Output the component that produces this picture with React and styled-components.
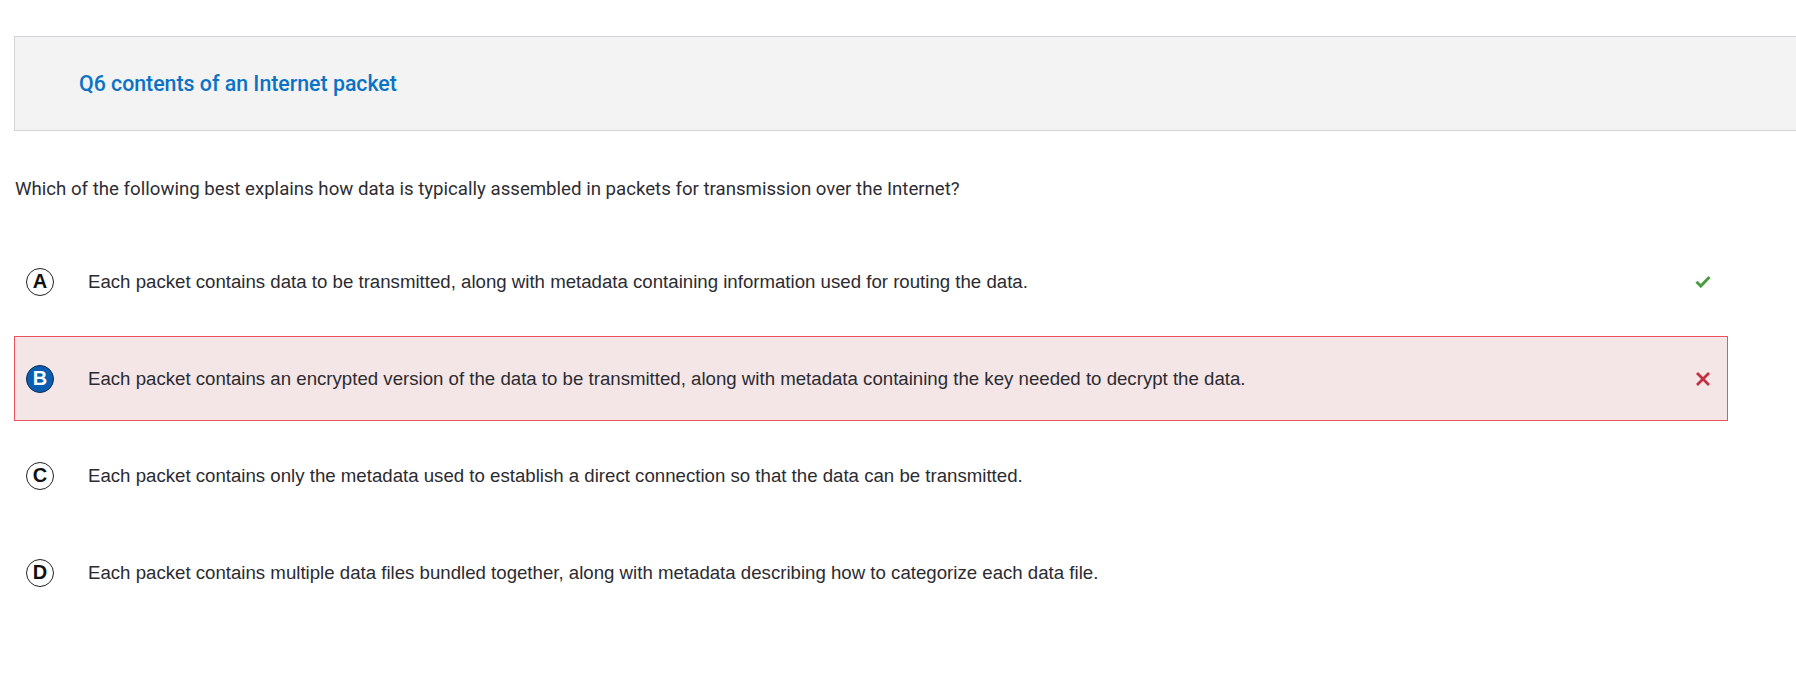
import styled, { createGlobalStyle } from "styled-components"

const GlobalStyle = createGlobalStyle`
  body {
    margin: 0;
    background: #fff;
  }
`

const Page = styled.div`
  padding: 36px 0 0 14px;
`

const Header = styled.div`
  height: 93px;
  display: flex;
  align-items: center;
  padding-left: 64px;
  background-color: #f3f3f3;
  border: 1px solid #d3d3d8;
  border-right: none;
`

const Title = styled.h2`
  margin: 0;
  color: #0b72c6;
  font-family: Roboto, "Noto Sans", sans-serif;
  font-size: 21.3px;
  font-weight: 500;
`

const Question = styled.p`
  margin: 46px 0 0 1px;
  color: #2d2d33;
  font-family: Roboto, "Liberation Sans", sans-serif;
  font-size: 18.65px;
  line-height: 24px;
`

const Options = styled.div`
  margin-top: 38px;
  width: 1714px;
  display: flex;
  flex-direction: column;
  gap: 12px;
`

const Option = styled.div`
  height: 85px;
  display: flex;
  align-items: center;
  padding: 0 11px;
  border: 1px solid ${p => (p.$wrong ? "#e9555f" : "transparent")};
  background: ${p => (p.$wrong ? "#f4e6e7" : "transparent")};
  box-sizing: border-box;
`

const Letter = styled.span`
  width: 28px;
  height: 28px;
  flex: none;
  box-sizing: border-box;
  border-radius: 50%;
  border: 1px solid ${p => (p.$picked ? "#0c2c52" : "#222")};
  background: ${p => (p.$picked ? "#0a5db1" : "#fff")};
  color: ${p => (p.$picked ? "#fff" : "#111")};
  display: flex;
  align-items: center;
  justify-content: center;
  font-family: "Liberation Sans", Arial, sans-serif;
  font-weight: 700;
  font-size: 20px;
`

const Text = styled.span`
  flex: 1;
  margin-left: 34px;
  color: #2b2b31;
  font-family: "Liberation Sans", Arial, sans-serif;
  font-size: 18.65px;
`

const Mark = styled.span`
  width: 20px;
  display: flex;
  justify-content: center;
  margin-right: 3px;
`

const Check = () => (
  <svg width="16" height="13" viewBox="0 0 16 13">
    <path d="M1.5 6.8 L5.8 11 L14.5 2" fill="none" stroke="#4a9d3e" strokeWidth="3" />
  </svg>
)

const Cross = () => (
  <svg width="16" height="16" viewBox="0 0 16 16">
    <path d="M2 2 L14 14 M14 2 L2 14" fill="none" stroke="#c52e3e" strokeWidth="2.8" />
  </svg>
)

const options = [
  { id: "A", text: "Each packet contains data to be transmitted, along with metadata containing information used for routing the data.", mark: "check" },
  { id: "B", text: "Each packet contains an encrypted version of the data to be transmitted, along with metadata containing the key needed to decrypt the data.", mark: "cross", picked: true },
  { id: "C", text: "Each packet contains only the metadata used to establish a direct connection so that the data can be transmitted." },
  { id: "D", text: "Each packet contains multiple data files bundled together, along with metadata describing how to categorize each data file." },
]

const App = () => {
  return (
    <>
      <GlobalStyle />
      <Page>
        <Header>
          <Title>Q6 contents of an Internet packet</Title>
        </Header>
        <Question>
          Which of the following best explains how data is typically assembled in packets for transmission over the Internet?
        </Question>
        <Options>
          {options.map(o => (
            <Option key={o.id} $wrong={o.picked}>
              <Letter $picked={o.picked}>{o.id}</Letter>
              <Text>{o.text}</Text>
              <Mark>
                {o.mark === "check" && <Check />}
                {o.mark === "cross" && <Cross />}
              </Mark>
            </Option>
          ))}
        </Options>
      </Page>
    </>
  )
}

export default App
